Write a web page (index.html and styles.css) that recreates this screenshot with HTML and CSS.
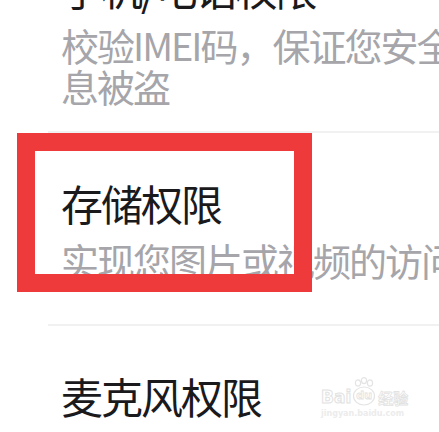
FILE: index.html
```html
<!DOCTYPE html>
<html lang="zh-CN">
<head>
  <meta charset="UTF-8" />
  <title>权限说明</title>
  <meta name="viewport" content="width=device-width, initial-scale=1.0" />
  <link rel="stylesheet" href="styles.css">
</head>
<body>
  <div class="screen">
    <ul class="perm-list">
      <li class="perm">
        <div class="perm-title">手机/电话权限</div>
        <div class="perm-desc">校验IMEI码，保证您安全信息被盗</div>
      </li>
      <li class="perm perm-wide">
        <div class="perm-title">存储权限</div>
        <div class="perm-desc">实现您图片或视频的访问</div>
      </li>
      <li class="perm">
        <div class="perm-title">麦克风权限</div>
        <div class="perm-desc">实现您的录音功能</div>
      </li>
    </ul>

    <!-- red highlight drawn over the storage item -->
    <div class="mark-box"></div>

    <div class="watermark">
      <div class="wm-logo">
        <span class="wm-bai">Bai</span>
        <span class="wm-paw">
          <svg width="24" height="30" viewBox="0 0 24 30">
            <ellipse cx="6" cy="6" rx="2.6" ry="3.2" fill="none" stroke="#e4e4e4" stroke-width="1.2"/>
            <ellipse cx="12" cy="3.6" rx="2.6" ry="3" fill="none" stroke="#e4e4e4" stroke-width="1.2"/>
            <ellipse cx="18" cy="6" rx="2.6" ry="3.2" fill="none" stroke="#e4e4e4" stroke-width="1.2"/>
            <ellipse cx="12" cy="19" rx="10.5" ry="9" fill="none" stroke="#e4e4e4" stroke-width="1.2"/>
          </svg>
          <span class="wm-du">du</span>
        </span>
        <span class="wm-jy">经验</span>
      </div>
      <div class="wm-url">jingyan.baidu.com</div>
    </div>
  </div>
</body>
</html>
```

FILE: styles.css
```css
html, body {
  margin: 0;
  padding: 0;
  background: #ffffff;
  overflow: hidden;
}

body {
  font-family: "Noto Sans CJK SC", "Noto Sans", sans-serif;
  width: 439px;
  height: 432px;
}

.screen {
  position: relative;
  width: 439px;
  height: 432px;
  overflow: hidden;
}

.perm-list {
  list-style: none;
  margin: -82px 0 0 0;
  padding: 0;
  width: 520px;
}

.perm {
  margin-left: 48px;
  padding: 46px 0 25px 13px;
  border-top: 2px solid #f1f1f1;
}

.perm:first-child {
  border-top: none;
}

.perm-wide {
  padding-bottom: 44px;
}

.perm-title {
  font-size: 42px;
  letter-spacing: -2px;
  line-height: 48px;
  color: #1a1a1d;
}

.perm-desc {
  margin-top: 12px;
  font-size: 38px;
  letter-spacing: -2px;
  line-height: 41px;
  color: #a5a5aa;
}

.mark-box {
  position: absolute;
  left: 17px;
  top: 133px;
  width: 295px;
  height: 159px;
  box-sizing: border-box;
  border: 18px solid #ee3a3a;
}

.watermark {
  position: absolute;
  left: 321px;
  top: 377px;
  width: 92px;
  color: #e6e6e6;
}

.wm-logo {
  display: flex;
  align-items: flex-end;
  height: 30px;
}

.wm-bai {
  font-family: "DejaVu Sans", sans-serif;
  font-weight: bold;
  font-size: 17px;
  line-height: 17px;
  color: #ffffff;
  -webkit-text-stroke: 1px #e2e2e2;
  margin-bottom: 1px;
}

.wm-paw {
  position: relative;
  width: 24px;
  height: 30px;
  margin-left: 1px;
}

.wm-paw svg {
  display: block;
}

.wm-du {
  position: absolute;
  left: 4px;
  top: 12px;
  font-family: "DejaVu Sans", sans-serif;
  font-weight: bold;
  font-size: 11px;
  color: #ffffff;
  -webkit-text-stroke: 0.8px #e2e2e2;
}

.wm-jy {
  font-size: 15px;
  line-height: 17px;
  font-weight: bold;
  color: #ffffff;
  -webkit-text-stroke: 0.8px #e2e2e2;
  margin-left: 2px;
  margin-bottom: 1px;
}

.wm-url {
  font-family: "DejaVu Sans", sans-serif;
  font-size: 8px;
  font-weight: bold;
  line-height: 10px;
  color: #ececec;
  margin-top: 2px;
}
```
